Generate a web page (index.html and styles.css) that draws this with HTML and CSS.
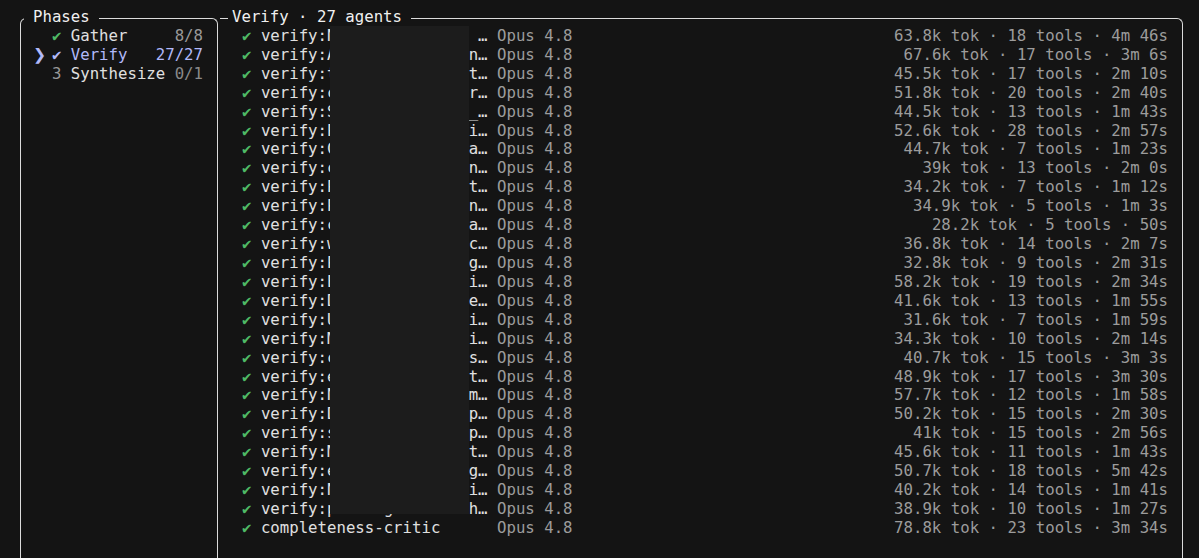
FILE: index.html
```html
<!DOCTYPE html>
<html lang="en">
<head>
<meta charset="utf-8">
<title>Phases</title>
<link rel="stylesheet" href="styles.css">
</head>
<body>
<div class="screen">
  <section class="panel phases">
    <div class="title">Phases</div>
    <div class="phase-row done"><span class="mark"></span><span class="icon">✔</span><span class="pname">Gather</span><span class="count">8/8</span></div>
    <div class="phase-row current"><span class="mark">❯</span><span class="icon">✔</span><span class="pname">Verify</span><span class="count">27/27</span></div>
    <div class="phase-row pending"><span class="mark"></span><span class="icon">3</span><span class="pname">Synthesize</span><span class="count">0/1</span></div>
  </section>
  <section class="panel agents">
    <div class="title">Verify · 27 agents</div>
    <div class="agent"><span class="icon">✔</span><span class="aname">verify:N               …</span><span class="model">Opus 4.8</span><span class="stats">63.8k tok · 18 tools · 4m 46s</span></div>
    <div class="agent"><span class="icon">✔</span><span class="aname">verify:A              n…</span><span class="model">Opus 4.8</span><span class="stats">67.6k tok · 17 tools · 3m 6s</span></div>
    <div class="agent"><span class="icon">✔</span><span class="aname">verify:t              t…</span><span class="model">Opus 4.8</span><span class="stats">45.5k tok · 17 tools · 2m 10s</span></div>
    <div class="agent"><span class="icon">✔</span><span class="aname">verify:c              r…</span><span class="model">Opus 4.8</span><span class="stats">51.8k tok · 20 tools · 2m 40s</span></div>
    <div class="agent"><span class="icon">✔</span><span class="aname">verify:S              _…</span><span class="model">Opus 4.8</span><span class="stats">44.5k tok · 13 tools · 1m 43s</span></div>
    <div class="agent"><span class="icon">✔</span><span class="aname">verify:P              i…</span><span class="model">Opus 4.8</span><span class="stats">52.6k tok · 28 tools · 2m 57s</span></div>
    <div class="agent"><span class="icon">✔</span><span class="aname">verify:C              a…</span><span class="model">Opus 4.8</span><span class="stats">44.7k tok · 7 tools · 1m 23s</span></div>
    <div class="agent"><span class="icon">✔</span><span class="aname">verify:c              n…</span><span class="model">Opus 4.8</span><span class="stats">39k tok · 13 tools · 2m 0s</span></div>
    <div class="agent"><span class="icon">✔</span><span class="aname">verify:P              t…</span><span class="model">Opus 4.8</span><span class="stats">34.2k tok · 7 tools · 1m 12s</span></div>
    <div class="agent"><span class="icon">✔</span><span class="aname">verify:P              n…</span><span class="model">Opus 4.8</span><span class="stats">34.9k tok · 5 tools · 1m 3s</span></div>
    <div class="agent"><span class="icon">✔</span><span class="aname">verify:c              a…</span><span class="model">Opus 4.8</span><span class="stats">28.2k tok · 5 tools · 50s</span></div>
    <div class="agent"><span class="icon">✔</span><span class="aname">verify:w              c…</span><span class="model">Opus 4.8</span><span class="stats">36.8k tok · 14 tools · 2m 7s</span></div>
    <div class="agent"><span class="icon">✔</span><span class="aname">verify:P              g…</span><span class="model">Opus 4.8</span><span class="stats">32.8k tok · 9 tools · 2m 31s</span></div>
    <div class="agent"><span class="icon">✔</span><span class="aname">verify:E              i…</span><span class="model">Opus 4.8</span><span class="stats">58.2k tok · 19 tools · 2m 34s</span></div>
    <div class="agent"><span class="icon">✔</span><span class="aname">verify:D              e…</span><span class="model">Opus 4.8</span><span class="stats">41.6k tok · 13 tools · 1m 55s</span></div>
    <div class="agent"><span class="icon">✔</span><span class="aname">verify:U              i…</span><span class="model">Opus 4.8</span><span class="stats">31.6k tok · 7 tools · 1m 59s</span></div>
    <div class="agent"><span class="icon">✔</span><span class="aname">verify:M              i…</span><span class="model">Opus 4.8</span><span class="stats">34.3k tok · 10 tools · 2m 14s</span></div>
    <div class="agent"><span class="icon">✔</span><span class="aname">verify:c              s…</span><span class="model">Opus 4.8</span><span class="stats">40.7k tok · 15 tools · 3m 3s</span></div>
    <div class="agent"><span class="icon">✔</span><span class="aname">verify:e              t…</span><span class="model">Opus 4.8</span><span class="stats">48.9k tok · 17 tools · 3m 30s</span></div>
    <div class="agent"><span class="icon">✔</span><span class="aname">verify:N              m…</span><span class="model">Opus 4.8</span><span class="stats">57.7k tok · 12 tools · 1m 58s</span></div>
    <div class="agent"><span class="icon">✔</span><span class="aname">verify:D              p…</span><span class="model">Opus 4.8</span><span class="stats">50.2k tok · 15 tools · 2m 30s</span></div>
    <div class="agent"><span class="icon">✔</span><span class="aname">verify:s              p…</span><span class="model">Opus 4.8</span><span class="stats">41k tok · 15 tools · 2m 56s</span></div>
    <div class="agent"><span class="icon">✔</span><span class="aname">verify:M              t…</span><span class="model">Opus 4.8</span><span class="stats">45.6k tok · 11 tools · 1m 43s</span></div>
    <div class="agent"><span class="icon">✔</span><span class="aname">verify:e              g…</span><span class="model">Opus 4.8</span><span class="stats">50.7k tok · 18 tools · 5m 42s</span></div>
    <div class="agent"><span class="icon">✔</span><span class="aname">verify:N              i…</span><span class="model">Opus 4.8</span><span class="stats">40.2k tok · 14 tools · 1m 41s</span></div>
    <div class="agent"><span class="icon">✔</span><span class="aname">verify:pricingfo-ls-sch…</span><span class="model">Opus 4.8</span><span class="stats">38.9k tok · 10 tools · 1m 27s</span></div>
    <div class="agent"><span class="icon">✔</span><span class="aname">completeness-critic</span><span class="model">Opus 4.8</span><span class="stats">78.8k tok · 23 tools · 3m 34s</span></div>
    <div class="redact"></div>
  </section>
</div>
</body>
</html>
```

FILE: styles.css
```css
* { box-sizing: border-box; }

html, body {
  margin: 0;
  background: #141414;
}

body {
  font-family: "DejaVu Sans Mono", "Liberation Mono", monospace;
  font-size: 15.7px;
  line-height: 18.92px;
  color: #e0e0e0;
}

.screen {
  display: flex;
  height: 558px;
  overflow: hidden;
  padding: 17.5px 16px 0 19.5px;
}

.panel {
  min-height: 620px;
  border-top: 1px solid #dcdcdc;
  border-right: 1px solid #dcdcdc;
}

.title {
  width: fit-content;
  margin-top: -10.5px;
  background: #141414;
  color: #f0f0f0;
  white-space: pre;
}

.phases {
  width: 198.5px;
  flex: none;
  border-left: 1px solid #dcdcdc;
  border-radius: 6px 6px 0 0;
  padding: 0 14px 0 12.5px;
}

.phases .title {
  margin-left: -1ch;
  padding: 0 1ch;
}

.phase-row {
  display: flex;
  white-space: pre;
}

.mark, .icon {
  width: 18.9px;
  flex: none;
}

.mark {
  color: #b1b9f9;
  font-family: "DejaVu Sans", sans-serif;
  font-weight: bold;
}

.count {
  margin-left: auto;
  color: #9a9a9a;
}

.done .icon { color: #4eba65; }

.current .icon,
.current .pname,
.current .count { color: #b1b9f9; }

.pending .icon { color: #9a9a9a; }
.pending .pname { color: #e0e0e0; }
.pending .count { color: #8a8a8a; }

.agents {
  flex: 1;
  margin-left: 2px;
  border-radius: 0 6px 0 0;
  padding: 0 14px 0 22px;
  position: relative;
}

.agents .title {
  margin-left: -14px;
  padding: 0 1ch 0 4px;
}

.agent {
  display: flex;
  white-space: pre;
}

.agent .icon { color: #4eba65; }

.aname {
  width: 25ch;
  flex: none;
  color: #e0e0e0;
}

.model { color: #9c9c9c; }

.stats {
  margin-left: auto;
  color: #9c9c9c;
}

.redact {
  position: absolute;
  left: 110px;
  top: 7.5px;
  width: 139px;
  height: 488px;
  background: #1c1c1c;
}
```
